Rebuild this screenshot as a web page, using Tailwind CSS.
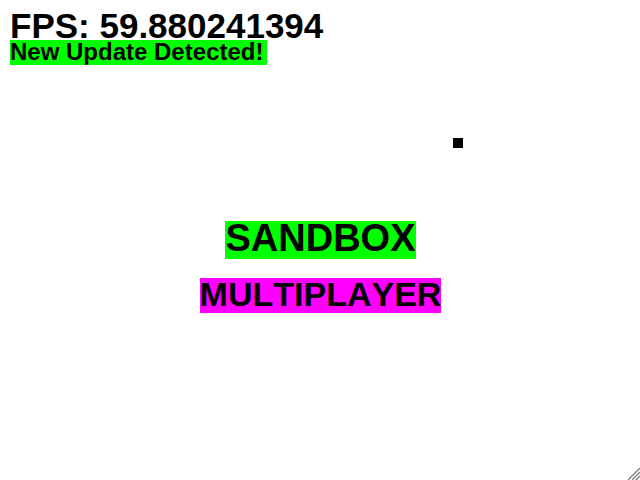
<!DOCTYPE html>
<html lang="en">
<head>
<meta charset="utf-8">
<meta name="viewport" content="width=device-width, initial-scale=1">
<title>Game Menu</title>
<script src="https://cdn.jsdelivr.net/npm/@tailwindcss/browser@4"></script>
</head>
<body class="relative min-h-screen overflow-hidden bg-white font-['Liberation_Sans',Arial,sans-serif] font-bold text-black [font-kerning:none]">
  <header class="flex flex-col items-start px-[10px] pt-3">
    <p class="text-[35px] leading-7 whitespace-nowrap">FPS: 59.880241394</p>
    <p class="bg-[#00ff00] pr-1 pb-px text-[24px] leading-6 whitespace-nowrap">New Update Detected!</p>
  </header>
  <main class="flex flex-col items-center gap-[19px] pt-[156px] pl-px">
    <button type="button" class="bg-[#00ff00] pb-1 text-[38px] leading-[34px]">SANDBOX</button>
    <button type="button" class="bg-[#ff00ff] pb-[3px] text-[34px] leading-8">MULTIPLAYER</button>
  </main>
  <!-- Player -->
  <div class="absolute top-[138px] left-[453px] size-[10px] bg-black"></div>
  <!-- Window resize grip -->
  <svg class="absolute right-0 bottom-0 size-3" viewBox="0 0 12 12" fill="none" stroke="#808080" stroke-width="1.4" aria-hidden="true">
    <path d="M0 12L12 0M4 12L12 4M8 12L12 8"/>
  </svg>
</body>
</html>
